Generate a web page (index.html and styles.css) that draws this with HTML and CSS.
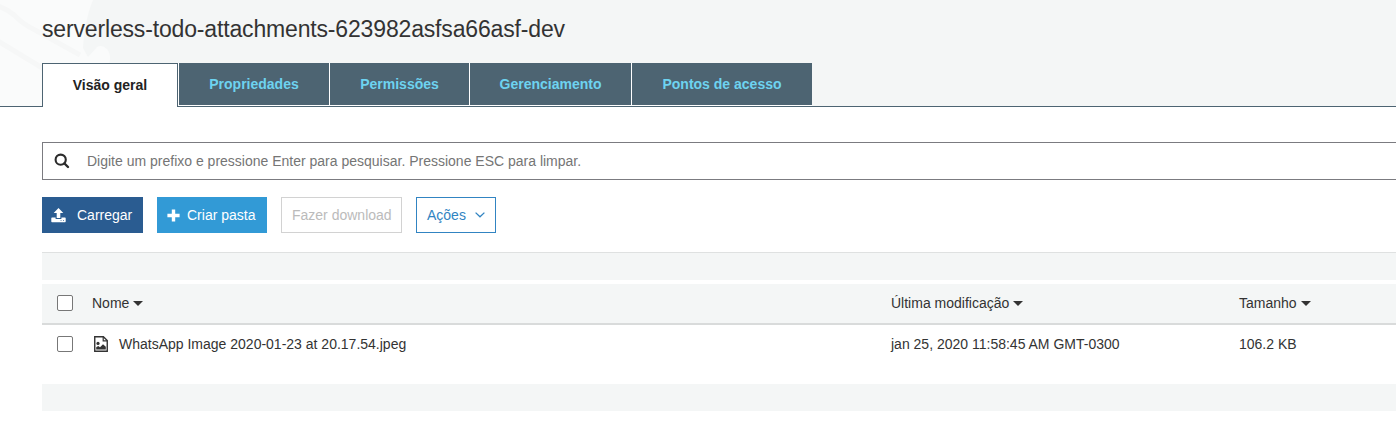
FILE: index.html
```html
<!DOCTYPE html>
<html lang="pt-BR">
<head>
<meta charset="utf-8">
<title>serverless-todo-attachments-623982asfsa66asf-dev</title>
<link rel="stylesheet" href="styles.css">
</head>
<body>
<header class="header">
  <svg class="header-art" width="120" height="106" viewBox="0 0 120 106">
    <path fill="#fafbfb" d="M0 0H93C86 17 84 34 83 48L88 57L97 47Q102 44 107 49Q112 55 109 64V106H0Z"/>
    <path fill="none" stroke="#f6f7f7" stroke-width="5" d="M-2 6Q7 9 14 15Q24 25 35 30L80 55M-2 41L44 69"/>
  </svg>
  <h1 class="title">serverless-todo-attachments-623982asfsa66asf-dev</h1>
  <nav class="tabs">
    <a class="tab tab-active">Visão geral</a>
    <a class="tab tab-properties">Propriedades</a>
    <a class="tab tab-permissions">Permissões</a>
    <a class="tab tab-management">Gerenciamento</a>
    <a class="tab tab-access">Pontos de acesso</a>
  </nav>
</header>
<main class="content">
  <div class="search">
    <svg class="search-icon" width="16" height="16" viewBox="0 0 16 16" fill="none" stroke="#2b2b2b"><circle cx="6.7" cy="6.7" r="5.1" stroke-width="2.1"/><path d="M10.5 10.5L14 14" stroke-width="2.4" stroke-linecap="round"/></svg>
    <span class="search-text">Digite um prefixo e pressione Enter para pesquisar. Pressione ESC para limpar.</span>
  </div>
  <div class="actions">
    <button class="button upload">
      <svg width="15" height="15" viewBox="0 0 15 15" fill="#fff"><path d="M7.5 0L12.3 5H9.3V10H5.7V5H2.7Z"/><path fill-rule="evenodd" d="M1 9.6H4.6V11.1H10.4V9.6H14Q14.7 9.6 14.7 10.3V13.6Q14.7 14.3 14 14.3H1Q.3 14.3 .3 13.6V10.3Q.3 9.6 1 9.6ZM9.6 12.2V13.1H10.5V12.2ZM12 12.2V13.1H12.9V12.2Z"/></svg>
      <span>Carregar</span>
    </button>
    <button class="button create">
      <svg width="13" height="13" viewBox="0 0 13 13" fill="#fff"><path d="M4.8.4H8.2V4.8H12.6V8.2H8.2V12.6H4.8V8.2H.4V4.8H4.8Z"/></svg>
      <span>Criar pasta</span>
    </button>
    <button class="button download">Fazer download</button>
    <button class="button menu">
      <span>Ações</span>
      <svg width="10" height="6" viewBox="0 0 10 6" fill="none" stroke="#3184c2" stroke-width="1.3"><path d="M.6.6L5 4.8L9.4.6"/></svg>
    </button>
  </div>
  <div class="bar bar-top"></div>
  <section class="table">
    <div class="row head">
      <span class="checkbox"></span>
      <span class="name">Nome<i class="caret"></i></span>
      <span class="date">Última modificação<i class="caret"></i></span>
      <span>Tamanho<i class="caret"></i></span>
    </div>
    <div class="row file">
      <span class="checkbox"></span>
      <span class="name">
        <svg class="file-icon" width="14" height="16" viewBox="0 0 14 16"><path d="M.75.75H9.4L13.25 4.6V15.25H.75Z" fill="#fff" stroke="#333" stroke-width="1.4"/><path d="M9.2.8V4.9H13.2" fill="none" stroke="#333" stroke-width="1.2"/><circle cx="4" cy="7.4" r="1.6" fill="#333"/><path d="M2.2 13.4V11.3L4.2 9.9L6 11.2L9 8.2L11.8 10.8V13.4Z" fill="#333"/></svg>
        <span>WhatsApp Image 2020-01-23 at 20.17.54.jpeg</span>
      </span>
      <span class="date">jan 25, 2020 11:58:45 AM GMT-0300</span>
      <span>106.2 KB</span>
    </div>
  </section>
  <div class="bar bar-bottom"></div>
</main>
</body>
</html>
```
FILE: styles.css
```css
* { box-sizing: border-box; }
body {
  margin: 0;
  overflow: hidden;
  background: #fff;
  color: #333;
  font: 14px/20px "Liberation Sans", Arial, sans-serif;
}
.header {
  position: relative;
  height: 107px;
  padding: 14px 0 0 42px;
  background: #f4f6f6;
  border-bottom: 1px solid #4d6472;
}
.header-art { position: absolute; left: 0; top: 0; }
.title {
  position: relative;
  margin: 0 0 19px;
  font-size: 23px;
  letter-spacing: -0.16px;
  line-height: 30px;
  font-weight: 400;
  white-space: nowrap;
}
.tabs { position: relative; display: flex; gap: 1px; width: 770px; height: 43px; background: #fff; }
.tab {
  height: 42px;
  background: #4d6472;
  color: #6dd3f0;
  font-weight: 700;
  line-height: 42px;
  text-align: center;
}
.tab-active {
  width: 136px;
  height: 44px;
  background: #fff;
  color: #222;
  border: 1px solid #4d6472;
  border-bottom: 0;
}
.tab-properties { width: 150px; }
.tab-permissions { width: 139px; }
.tab-management { width: 161px; }
.tab-access { width: 180px; }
.content { padding: 35px 0 0 42px; }
.search {
  display: flex;
  align-items: center;
  height: 38px;
  padding-left: 11px;
  border: 1px solid #7b7b80;
  border-right: 0;
}
.search-text { margin-left: 17px; color: #757575; }
.actions { display: flex; gap: 14px; height: 36px; margin: 17px 0 19px; }
.button {
  display: flex;
  align-items: center;
  height: 36px;
  padding: 0 0 0 9px;
  border: 1px solid transparent;
  background: #fff;
  font: inherit;
  white-space: nowrap;
}
.upload { width: 101px; gap: 11px; padding-left: 8px; background: #2a5c91; border-color: #2a5c91; color: #fff; }
.create { width: 110px; gap: 7px; background: #329ad6; border-color: #329ad6; color: #fff; }
.download { width: 121px; padding-left: 10px; border-color: #d2d2d2; color: #bbb; }
.menu { width: 80px; gap: 9px; padding-left: 10px; border-color: #3184c2; color: #3184c2; }
.bar { background: #f4f6f6; }
.bar-top { height: 28px; margin-bottom: 4px; border-top: 1px solid #dfe1e1; }
.bar-bottom { height: 27px; }
.row { display: grid; grid-template-columns: 35px 799px 348px 1fr; align-items: center; padding-left: 15px; }
.head { height: 41px; padding-bottom: 1px; background: #f4f6f6; border-bottom: 2px solid #d9dbdb; }
.file { height: 59px; padding-bottom: 21px; }
.checkbox { width: 16px; height: 16px; border: 1px solid #777; border-radius: 2px; background: #fff; }
.name { display: flex; align-items: center; }
.file-icon { margin: 0 11px 0 2px; }
.caret {
  display: inline-block;
  margin-left: 4px;
  border: 5px solid transparent;
  border-top-color: #333;
  border-bottom: 0;
  vertical-align: 2px;
}
```
